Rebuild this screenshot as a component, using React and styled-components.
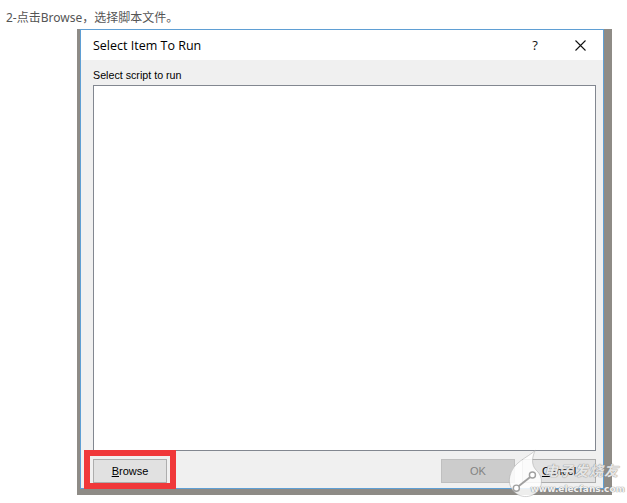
// Select Item To Run dialog screenshot

import React from "react";
import styled, { createGlobalStyle } from "styled-components";

const GlobalStyle = createGlobalStyle`
  html, body {
    margin: 0;
    padding: 0;
    background: #ffffff;
  }
  body {
    width: 627px;
    height: 503px;
    overflow: hidden;
    font-family: "Noto Sans", "Noto Sans CJK SC", sans-serif;
  }
`;

const Page = styled.div`
  position: relative;
  width: 627px;
  height: 503px;
  overflow: hidden;
`;

const Caption = styled.p`
  margin: 0;
  padding: 10px 0 0 6px;
  height: 19px;
  font-family: "Noto Sans", "Noto Sans CJK SC", sans-serif;
  font-size: 12px;
  line-height: 16px;
  color: #555555;
`;

// Screenshot shadow strip around the dialog
const Shadow = styled.div`
  margin-left: 77px;
  width: 524px;
  border-left: 3px solid #8e8b86;
  border-right: 8px solid #8e8b86;
  border-bottom: 6px solid #8e8b86;
`;

const Dialog = styled.div`
  box-sizing: border-box;
  width: 524px;
  height: 460px;
  border: 1px solid #5f9fd4;
  background: #f0f0f0;
  display: flex;
  flex-direction: column;
`;

const TitleBar = styled.div`
  height: 30px;
  background: #ffffff;
  display: flex;
  align-items: center;
  padding-left: 12px;
`;

const Title = styled.span`
  flex: 1;
  font-family: "Open Sans", "Noto Sans", sans-serif;
  font-size: 12.5px;
  color: #000000;
  padding-top: 1px;
`;

const TitleButton = styled.div`
  width: ${({ w }) => w}px;
  height: 30px;
  display: flex;
  align-items: center;
  justify-content: center;
  font-family: "Open Sans", sans-serif;
  font-size: 13px;
  color: #111111;
`;

const Body = styled.div`
  flex: 1;
  display: flex;
  flex-direction: column;
  padding: 8px 7px 0 12px;
`;

const Label = styled.div`
  font-family: "Liberation Sans", Arial, sans-serif;
  font-size: 10.7px;
  line-height: 15px;
  color: #000000;
  margin-bottom: 2px;
`;

const ListBox = styled.div`
  height: 366px;
  box-sizing: border-box;
  background: #ffffff;
  border: 1px solid #828790;
`;

const ButtonRow = styled.div`
  display: flex;
  align-items: center;
  padding-top: 8px;
  gap: 7px;
`;

const Button = styled.div`
  box-sizing: border-box;
  width: 74px;
  height: 24px;
  display: flex;
  align-items: center;
  justify-content: center;
  background: ${({ disabled }) => (disabled ? "#cccccc" : "#e1e1e1")};
  border: 1px solid ${({ disabled }) => (disabled ? "#bfbfbf" : "#adadad")};
  font-family: "Liberation Sans", Arial, sans-serif;
  font-size: 11px;
  color: ${({ disabled }) => (disabled ? "#838383" : "#000000")};
  margin-left: ${({ push }) => (push ? "auto" : "0")};
  u {
    text-decoration: underline;
  }
`;

// Annotation drawn over the screenshot
const Highlight = styled.div`
  position: absolute;
  left: 84px;
  top: 450px;
  width: 92px;
  height: 39px;
  box-sizing: border-box;
  border: 6px solid #f0383a;
`;

const Watermark = styled.div`
  position: absolute;
  left: 505px;
  top: 447px;
  width: 120px;
  display: flex;
  align-items: flex-start;
  pointer-events: none;
`;

const MarkText = styled.div`
  display: flex;
  flex-direction: column;
  align-items: flex-end;
  margin-left: -18px;
`;

const MarkTitle = styled.div`
  font-family: "Noto Sans CJK SC", sans-serif;
  font-size: 14px;
  font-weight: 700;
  line-height: 18px;
  margin-top: 14px;
  margin-right: 6px;
  color: rgba(255, 255, 255, 0.8);
  text-shadow: 0 0 1px #8a8a8a, 0 0 1px #8a8a8a;
  font-style: italic;
  letter-spacing: 1px;
`;

const MarkUrl = styled.div`
  font-family: "DejaVu Sans", sans-serif;
  font-size: 9px;
  font-weight: 700;
  line-height: 14px;
  margin-top: 3px;
  color: rgba(255, 255, 255, 0.9);
  text-shadow: 0 0 1px #8a8a8a, 0 0 1px #8a8a8a;
`;

const CloseIcon = () => (
  <svg width="11" height="11" viewBox="0 0 11 11">
    <path d="M0.5 0.5 L10.5 10.5 M10.5 0.5 L0.5 10.5" stroke="#111" strokeWidth="1.1" fill="none" />
  </svg>
);

const Logo = () => (
  <svg width="46" height="54" viewBox="0 0 46 54">
    <path
      d="M32 2 C24 10 8 14 5 30 C2 44 16 54 27 50 C40 46 42 31 33 23 C27 17 29 8 32 2 Z"
      fill="rgba(255,255,255,0.85)"
      stroke="rgba(160,160,160,0.5)"
      strokeWidth="1"
    />
    <line x1="13" y1="41" x2="28" y2="29" stroke="#a0a0a0" strokeWidth="2" />
    <circle cx="12" cy="42" r="3.2" fill="#fff" stroke="#a0a0a0" strokeWidth="1.5" />
    <circle cx="29" cy="28" r="3.2" fill="#fff" stroke="#a0a0a0" strokeWidth="1.5" />
  </svg>
);

const App = () => {
  return (
    <Page>
      <GlobalStyle />
      <Caption>2-点击Browse，选择脚本文件。</Caption>
      <Shadow>
        <Dialog>
          <TitleBar>
            <Title>Select Item To Run</Title>
            <TitleButton w={44}>?</TitleButton>
            <TitleButton w={46}>
              <CloseIcon />
            </TitleButton>
          </TitleBar>
          <Body>
            <Label>Select script to run</Label>
            <ListBox />
            <ButtonRow>
              <Button>
                <span>
                  <u>B</u>rowse
                </span>
              </Button>
              <Button disabled push>
                OK
              </Button>
              <Button>
                <span>
                  <u>C</u>ancel
                </span>
              </Button>
            </ButtonRow>
          </Body>
        </Dialog>
      </Shadow>
      <Highlight />
      <Watermark>
        <Logo />
        <MarkText>
          <MarkTitle>电子发烧友</MarkTitle>
          <MarkUrl>www.elecfans.com</MarkUrl>
        </MarkText>
      </Watermark>
    </Page>
  );
};

export default App;
